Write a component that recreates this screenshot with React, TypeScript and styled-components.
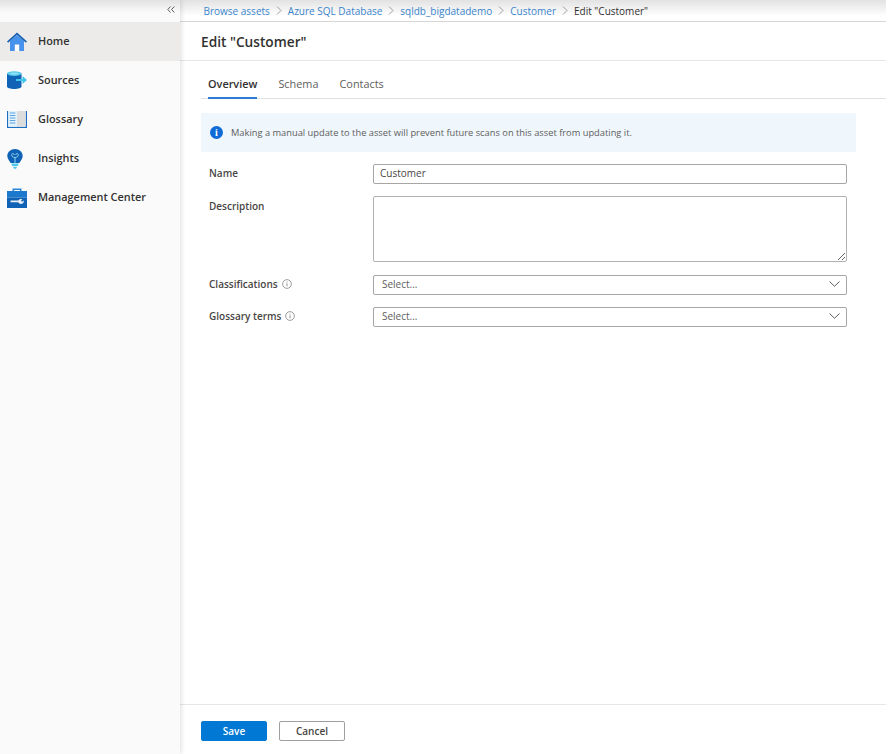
import React from "react";
import styled, { createGlobalStyle } from "styled-components";

const GlobalStyle = createGlobalStyle`
  html, body {
    margin: 0;
    padding: 0;
    height: 100%;
    background: #fff;
  }
  body {
    font-family: "Open Sans", "Liberation Sans", sans-serif;
    color: #323130;
    overflow: hidden;
  }
`;

const HomeIcon = () => (
  <svg width="20" height="19" viewBox="0 0 20 19">
    <path d="M3 9 10 3l7 6v10H3z" fill="#4692ec" />
    <path d="M7.800 12.500h4.400V19H7.800z" fill="#fff" />
    <path d="M0 9.600 10 .4l10 9.200-1.100 1.100L10 2.700 1.100 10.700z" fill="#155fb0" />
  </svg>
);

const SourcesIcon = () => (
  <svg width="20" height="18" viewBox="0 0 20 18">
    <path d="M0 2.500h14.500v13c0 1.400-3.200 2.500-7.250 2.500S0 16.900 0 15.500z" fill="#0f62b5" />
    <ellipse cx="7.250" cy="2.600" rx="7.250" ry="2.400" fill="#50c7e8" />
    <ellipse cx="7.250" cy="2.600" rx="4.600" ry="1.200" fill="#8fe2f5" />
    <path d="M9 8h6.500V4.900L20 9l-4.500 4.100V10H9z" fill="#3fc4ea" />
  </svg>
);

const GlossaryIcon = () => (
  <svg width="20" height="17" viewBox="0 0 20 17">
    <path d="M0 0h1.300v15.700H20V17H0z" fill="#1b6ec2" />
    <path d="M18.700 0H20v17h-1.300z" fill="#1b6ec2" />
    <path d="M1.300 0H10v15.700H1.300z" fill="#e3f1fb" />
    <path d="M10 0h8.700v15.700H10z" fill="#dcdcdc" />
    <path d="M2.800 2h5.600M2.800 4.500h5.600M2.800 7h5.600M2.800 9.500h5.600M2.800 12h5.600" stroke="#5ea6e6" strokeWidth="1.100" />
  </svg>
);

const InsightsIcon = () => (
  <svg width="16" height="20" viewBox="0 0 16 20">
    <path d="M8 0c4.300 0 7.700 3 7.700 7 0 3.200-2.300 4.700-3.300 7H3.600C2.600 11.700.3 10.200.3 7 .3 3 3.700 0 8 0z" fill="#0f62b5" />
    <path d="M4.400 14.600h7.200l-.7 2.500H5.100z" fill="#50c7e8" />
    <path d="M5.800 17.700h4.400L9 19.700H7z" fill="#50c7e8" />
    <path d="M8 14V8.500M8 8.500C5.800 8.500 4.800 7.300 4.800 6c0-1 .6-1.500 1.200-1.500S7.200 5 7.200 6M8 8.500c2.200 0 3.200-1.200 3.200-2.500 0-1-.6-1.500-1.200-1.500S8.800 5 8.800 6" stroke="#8fd3f0" strokeWidth="1" fill="none" />
  </svg>
);

const ManagementIcon = () => (
  <svg width="20" height="20" viewBox="0 0 20 20">
    <path d="M5.500 3V.6h9V3h-1.600V2.100H7.100V3z" fill="#2c86d8" />
    <path d="M0 3h20v6.500H0z" fill="#1b78cc" />
    <path d="M0 9.500h20V20H0z" fill="#0f62b5" />
    <path d="M3.500 12.600h7.800c.5-1.100 1.500-1.700 2.700-1.700.5 0 .9.100 1.300.3L14 12.700l1 1 1.600-1.300c.2.300.2.700.2 1 0 1.600-1.300 2.500-2.800 2.500-1.200 0-2.200-.6-2.700-1.600H3.500z" fill="#e9eef3" />
  </svg>
);

const CollapseIcon = () => (
  <svg width="8" height="7" viewBox="0 0 8 7">
    <path d="M3.500.5.800 3.500l2.700 3M7.300.5 4.600 3.500l2.700 3" fill="none" stroke="#605e5c" strokeWidth="1" />
  </svg>
);

const InfoGlyph = () => (
  <svg width="10" height="10" viewBox="0 0 11 11">
    <circle cx="5.500" cy="5.500" r="4.800" fill="none" stroke="#7a7876" strokeWidth=".8" />
    <path d="M5.500 4.800v3.200M5.500 2.800v1" stroke="#7a7876" strokeWidth=".9" />
  </svg>
);

const Chevron = () => (
  <svg width="11" height="6" viewBox="0 0 11 6">
    <path d="M.5.500 5.500 5.300 10.500.5" fill="none" stroke="#605e5c" strokeWidth="1" />
  </svg>
);

const Page = styled.div`
  width: 886px;
  height: 754px;
  display: flex;
`;

const Sidebar = styled.nav`
  width: 180px;
  flex: 0 0 auto;
  padding-top: 21.500px;
  box-sizing: border-box;
  background: linear-gradient(#e2e2e2, #fafafa 12px);
  position: relative;
  box-shadow: 1px 0 5px rgba(0, 0, 0, 0.14);
  z-index: 1;
`;

const Collapse = styled.span`
  position: absolute;
  top: 6px;
  right: 5px;
  display: flex;
`;

const NavItem = styled.div<{ $active?: boolean }>`
  height: 39.200px;
  display: flex;
  align-items: center;
  background: ${(p) => (p.$active ? "#edebe9" : "transparent")};
  font-size: 10.900px;
  font-weight: 600;
  color: #323130;
`;

const NavLabel = styled.span`
  padding-bottom: 2px;
`;

const NavIcon = styled.span`
  width: 38px;
  padding-left: 7px;
  box-sizing: border-box;
  display: flex;
  flex: 0 0 auto;
`;

const Main = styled.main`
  flex: 1;
  display: flex;
  flex-direction: column;
  min-width: 0;
`;

const Breadcrumbs = styled.div`
  height: 21px;
  border-bottom: 1px solid #d6d6d6;
  padding-left: 23.500px;
  display: flex;
  align-items: center;
  font-size: 10px;
  background: linear-gradient(#e2e2e2, #fff 75%);
`;

const Crumb = styled.span<{ $current?: boolean }>`
  color: ${(p) => (p.$current ? "#323130" : "#3a85cc")};
`;

const CrumbSep = styled.svg`
  width: 6px;
  height: 9px;
  margin: 0 6px;
`;

const Title = styled.h1`
  margin: 0;
  height: 39px;
  box-sizing: border-box;
  border-bottom: 1px solid #e6e6e6;
  padding-left: 21px;
  display: flex;
  align-items: center;
  font-size: 13.700px;
  font-weight: 600;
  color: #323130;
`;

const Body = styled.div`
  flex: 1;
  padding: 0 0 0 21px;
  display: flex;
  flex-direction: column;
`;

const Tabs = styled.div`
  height: 38px;
  border-bottom: 1px solid #e0e0e0;
  display: flex;
  gap: 21px;
  padding-left: 7px;
  box-sizing: border-box;
`;

const Tab = styled.div<{ $active?: boolean }>`
  display: flex;
  align-items: center;
  font-size: 10.900px;
  padding-top: 8px;
  margin-bottom: -1px;
  box-sizing: border-box;
  color: ${(p) => (p.$active ? "#323130" : "#605e5c")};
  font-weight: ${(p) => (p.$active ? 600 : 400)};
  border-bottom: 2px solid ${(p) => (p.$active ? "#2b7cd3" : "transparent")};
`;

const Notice = styled.div`
  width: 655px;
  height: 39px;
  margin-top: 14px;
  background: #eff6fc;
  display: flex;
  align-items: center;
  gap: 8px;
  padding-left: 10px;
  box-sizing: border-box;
  font-size: 9.300px;
  color: #605e5c;
`;

const InfoDot = styled.span`
  width: 13px;
  height: 13px;
  margin-left: -1px;
  border-radius: 50%;
  background: #0f6cd6;
  color: #fff;
  display: flex;
  align-items: center;
  justify-content: center;
  font: 700 10px "Liberation Serif", serif;
`;

const Form = styled.div`
  margin-top: 12px;
  width: 646px;
  display: flex;
  flex-direction: column;
  gap: 12.500px;
`;

const Row = styled.div`
  display: grid;
  grid-template-columns: 172px 474px;
`;

const Label = styled.label<{ $tall?: boolean }>`
  padding-left: 8px;
  padding-top: ${(p) => (p.$tall ? "3px" : "2px")};
  font-size: 10px;
  font-weight: 600;
  color: #484644;
  display: flex;
  align-items: flex-start;
  gap: 4px;
`;

const LabelHint = styled.span`
  display: flex;
  padding-top: 2px;
`;

const TextInput = styled.div`
  height: 19.500px;
  box-sizing: border-box;
  border: 1px solid #a8a6a4;
  border-radius: 2px;
  padding: 0 6px 1.500px;
  display: flex;
  align-items: center;
  font-size: 10px;
  color: #484644;
`;

const TextArea = styled.textarea`
  height: 66px;
  box-sizing: border-box;
  border: 1px solid #b3b0ad;
  border-radius: 2px;
  margin: 0;
  display: block;
  width: 100%;
  background: #fff;
`;

const SelectBox = styled(TextInput)`
  height: 20px;
  justify-content: space-between;
  padding: 0 6px 1.500px 8px;
  color: #605e5c;
`;

const Footer = styled.div`
  height: 50px;
  border-top: 1px solid #e6e6e6;
  padding: 16px 0 0 21px;
  display: flex;
  align-items: flex-start;
  gap: 12px;
  box-sizing: border-box;
`;

const Button = styled.button<{ $primary?: boolean }>`
  width: 66px;
  height: 20px;
  padding: 0;
  border-radius: 2px;
  font-family: inherit;
  font-size: 10px;
  font-weight: 600;
  background: ${(p) => (p.$primary ? "#0078d4" : "#fff")};
  color: ${(p) => (p.$primary ? "#fff" : "#484644")};
  border: 1px solid ${(p) => (p.$primary ? "#0078d4" : "#a19f9d")};
`;

const navItems = [
  { label: "Home", icon: <HomeIcon />, active: true },
  { label: "Sources", icon: <SourcesIcon /> },
  { label: "Glossary", icon: <GlossaryIcon /> },
  { label: "Insights", icon: <InsightsIcon /> },
  { label: "Management Center", icon: <ManagementIcon /> },
];

const crumbs = ["Browse assets", "Azure SQL Database", "sqldb_bigdatademo", "Customer"];

const App: React.FC = () => {
  return (
    <Page>
      <GlobalStyle />
      <Sidebar>
        <Collapse>
          <CollapseIcon />
        </Collapse>
        {navItems.map((item) => (
          <NavItem key={item.label} $active={item.active}>
            <NavIcon>{item.icon}</NavIcon>
            <NavLabel>{item.label}</NavLabel>
          </NavItem>
        ))}
      </Sidebar>
      <Main>
        <Breadcrumbs>
          {crumbs.map((crumb) => (
            <React.Fragment key={crumb}>
              <Crumb>{crumb}</Crumb>
              <CrumbSep viewBox="0 0 6 9">
                <path d="M1 .5 5 4.500 1 8.500" fill="none" stroke="#8a8886" strokeWidth=".8" />
              </CrumbSep>
            </React.Fragment>
          ))}
          <Crumb $current>Edit "Customer"</Crumb>
        </Breadcrumbs>
        <Title>Edit "Customer"</Title>
        <Body>
          <Tabs>
            <Tab $active>Overview</Tab>
            <Tab>Schema</Tab>
            <Tab>Contacts</Tab>
          </Tabs>
          <Notice>
            <InfoDot>i</InfoDot>
            Making a manual update to the asset will prevent future scans on this asset from updating it.
          </Notice>
          <Form>
            <Row>
              <Label>Name</Label>
              <TextInput>Customer</TextInput>
            </Row>
            <Row>
              <Label $tall>Description</Label>
              <TextArea />
            </Row>
            <Row>
              <Label>
                Classifications
                <LabelHint>
                  <InfoGlyph />
                </LabelHint>
              </Label>
              <SelectBox>
                Select...
                <Chevron />
              </SelectBox>
            </Row>
            <Row>
              <Label>
                Glossary terms
                <LabelHint>
                  <InfoGlyph />
                </LabelHint>
              </Label>
              <SelectBox>
                Select...
                <Chevron />
              </SelectBox>
            </Row>
          </Form>
        </Body>
        <Footer>
          <Button $primary>Save</Button>
          <Button>Cancel</Button>
        </Footer>
      </Main>
    </Page>
  );
};

export default App;
